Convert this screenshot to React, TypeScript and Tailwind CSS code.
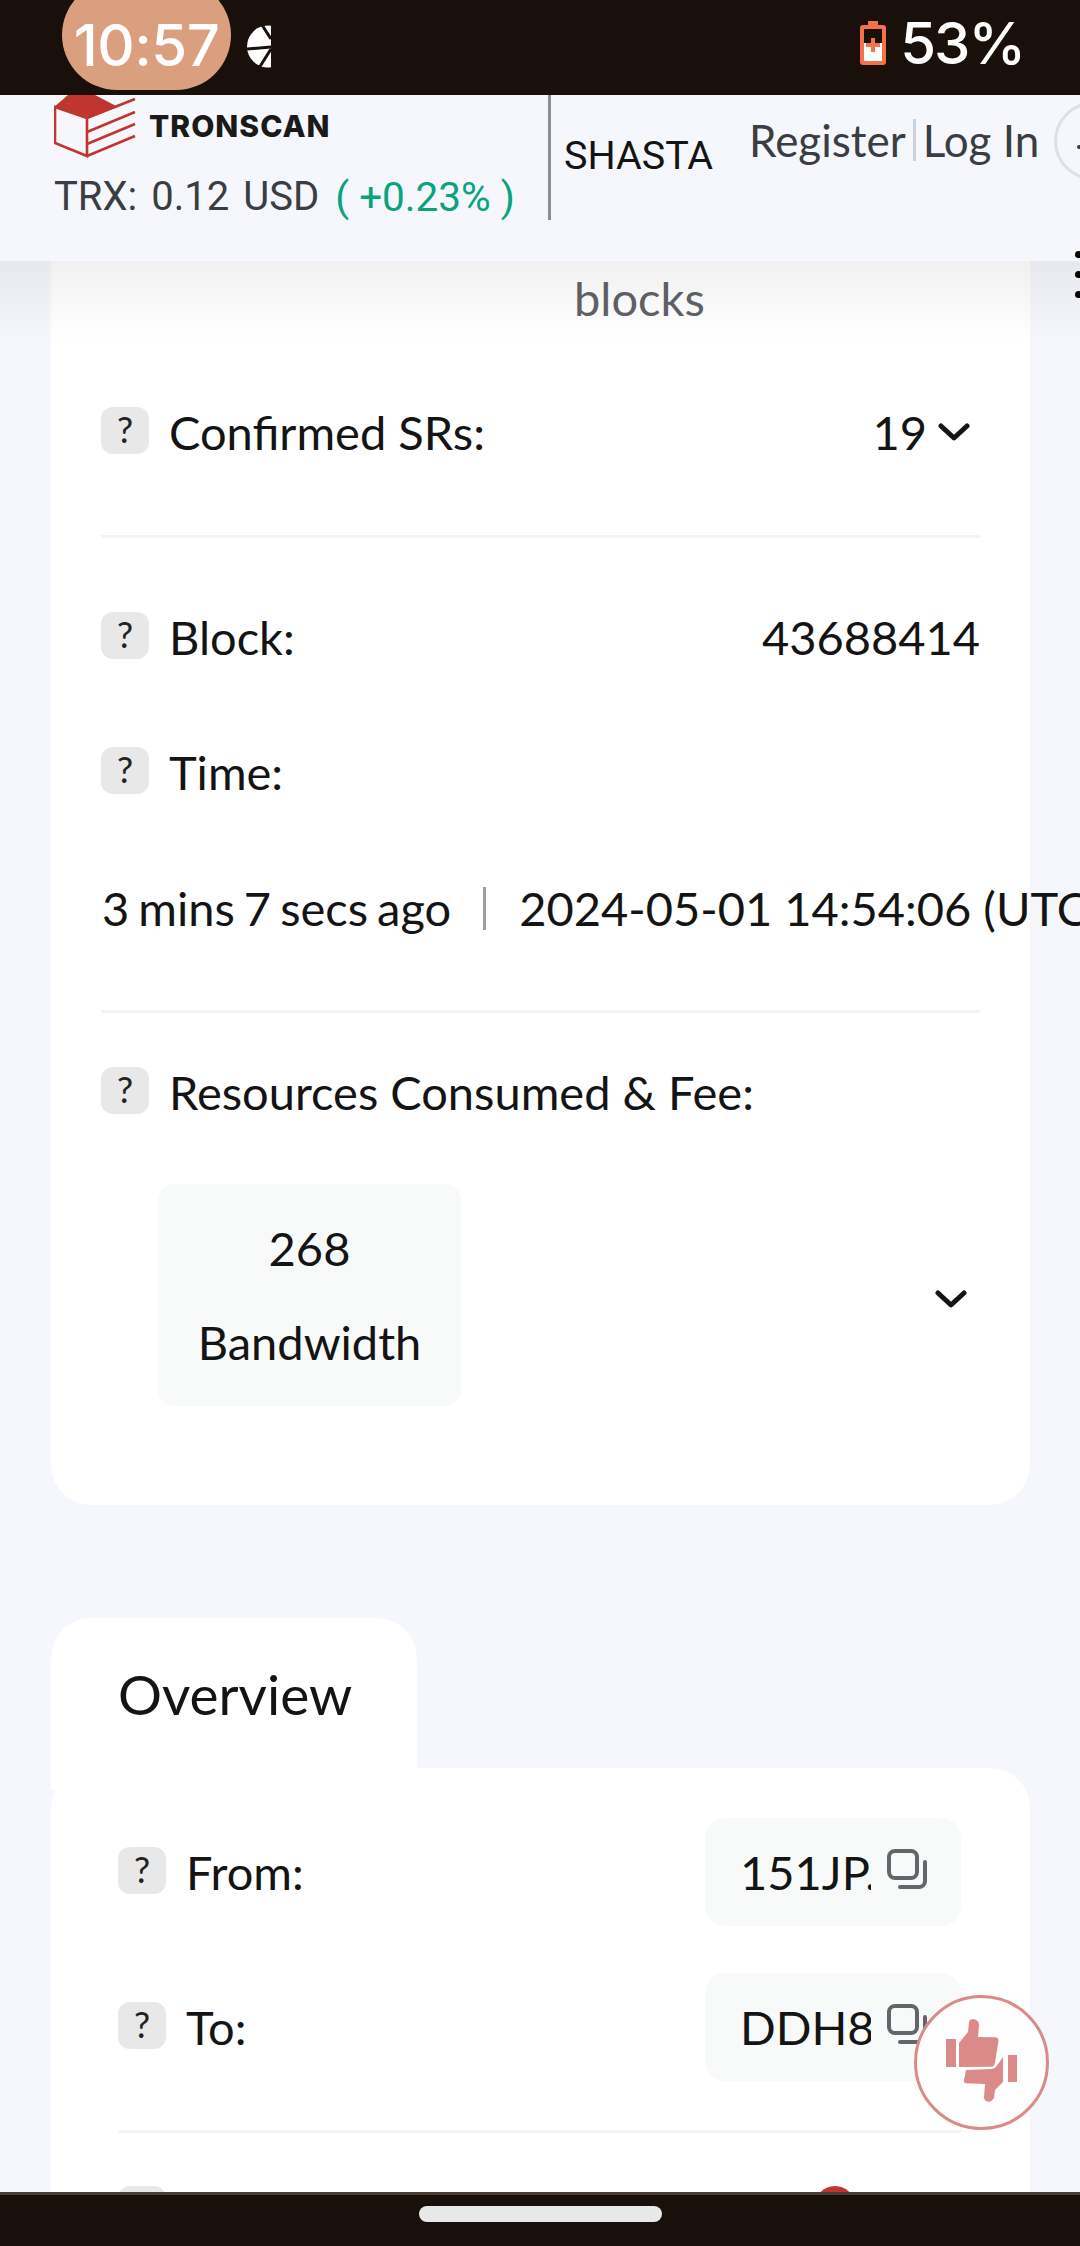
import type { ReactNode } from 'react'

const lato = 'font-["Lato",sans-serif]'
const roboto = 'font-["Roboto",sans-serif]'
const inter = 'font-["Inter",sans-serif]'

function Help() {
  return (
    <span className="flex h-[47px] w-[48px] shrink-0 items-center justify-center rounded-[12px] bg-[#e8e8e8] pb-[3px] text-[36px] leading-none text-[#222]">
      ?
    </span>
  )
}

function Label({ children }: { children: ReactNode }) {
  return (
    <div className="flex items-start gap-[20px]">
      <Help />
      <span className="text-[47px] leading-[50px] text-[#141414]">{children}</span>
    </div>
  )
}

function Chevron({ className }: { className: string }) {
  return (
    <svg viewBox="0 0 32 18" className={className} fill="none" stroke="#141414" strokeWidth="5" strokeLinecap="round" strokeLinejoin="round">
      <path d="M3 3l13 12L29 3" />
    </svg>
  )
}

function CopyIcon() {
  return (
    <svg viewBox="0 0 40 40" className="h-[40px] w-[40px] shrink-0" fill="none" stroke="#62666b" strokeWidth="4" strokeLinecap="round">
      <rect x="2" y="2" width="28" height="27" rx="6" />
      <path d="M38 13v19a6 6 0 0 1-6 6H13" />
    </svg>
  )
}

function AddressBox({ text }: { text: string }) {
  return (
    <div className="flex h-[108px] w-[256px] items-center rounded-[20px] bg-[#f8faf9] pl-[35px]">
      <span className="w-[131px] shrink-0 overflow-hidden whitespace-nowrap text-[47px] leading-[50px] text-[#141414]">{text}</span>
      <span className="ml-[16px] -translate-y-[3px]">
        <CopyIcon />
      </span>
    </div>
  )
}

function StatusBar() {
  return (
    <div className="relative flex h-[95px] shrink-0 items-start justify-between overflow-hidden bg-[#1a100b]">
      <div className="ml-[62px] flex items-center">
        <div className={`-mt-[20px] flex h-[110px] w-[169px] items-center justify-center rounded-[55px] bg-[#d99f7f] pt-[20px] text-[58px] font-medium leading-none tracking-[-0.5px] text-white ${inter}`}>
          10:57
        </div>
        <svg viewBox="0 0 24 43" className="ml-[16px] mt-[2px] h-[43px] w-[24px]">
          <circle cx="21" cy="21.5" r="21" fill="#fff" />
          <path d="M15 0l9 14M0 24l24-2M24 24L12 43" stroke="#1a100b" strokeWidth="3" fill="none" />
        </svg>
      </div>
      <div className="mr-[56px] mt-[14px] flex items-center gap-[14px]">
        <svg viewBox="0 0 26 44" className="h-[44px] w-[26px]">
          <path d="M8 0h10v4h5a3 3 0 0 1 3 3v34a3 3 0 0 1-3 3H3a3 3 0 0 1-3-3V7a3 3 0 0 1 3-3h5z" fill="#f4724a" />
          <rect x="4" y="8" width="18" height="32" fill="#1a100b" />
          <path d="M4 22h18v18H4z" fill="#fff" />
          <path d="M11 17h4v5h5v4h-5v5h-4v-5H6v-4h5z" fill="#f4724a" />
        </svg>
        <span className={`text-[58px] font-medium leading-none tracking-[-2px] text-white ${inter}`}>53%</span>
      </div>
    </div>
  )
}

function TopNav() {
  return (
    <header className="relative flex h-[166px] shrink-0 items-start overflow-hidden bg-[#f5f7fc]">
      <div className="w-[548px] shrink-0 pl-[54px]">
        <div className="flex h-[63px] items-start">
          <svg viewBox="54 95 82 63" className="h-[63px] w-[82px] shrink-0">
            <path d="M54 107l14-12h27l23 12-31 11z" fill="#c0352f" />
            <g fill="none" stroke="#c0352f" strokeWidth="2.6">
              <path d="M55 107v36l32 13v-38z" />
              <path d="M87 118l48-19M87 132l48-20M87 144l48-20M87 156l48-20" />
            </g>
          </svg>
          <span className={`ml-[13px] mt-[13px] text-[30px] font-extrabold leading-[36px] tracking-[1px] text-[#1a1a1a] ${inter}`}>
            TRONSCAN
          </span>
        </div>
        <div className={`mt-[14px] flex items-center whitespace-nowrap text-[40px] leading-[50px] text-[#3a3d42] ${roboto}`}>
          <span>TRX:</span>
          <span className="ml-[14px]">0.12</span>
          <span className="ml-[14px]">USD</span>
          <span className="ml-[16px] text-[40.5px] text-[#0aa37f]">( +0.23% )</span>
        </div>
      </div>
      <div className="h-[125px] w-[3px] shrink-0 bg-[#8a8f94]" />
      <span className={`ml-[13px] mt-[37px] text-[39.5px] leading-[48px] text-[#141414] ${roboto}`}>SHASTA</span>
      <div className={`absolute left-[749px] top-[20px] flex h-[50px] items-center whitespace-nowrap text-[44px] text-[#3a3d42] ${lato}`}>
        <span>Register</span>
        <span className="mx-[7px] h-[42px] w-[3px] bg-[#ccd2dc]" />
        <span>Log In</span>
      </div>
      <div className="absolute left-[1054px] top-[7px] flex h-[78px] w-[78px] items-center rounded-full border-[3px] border-[#dde0e5] pl-[20px]">
        <span className="mt-[12px] h-[4px] w-[8px] rounded-full bg-[#3a3d42]" />
      </div>
    </header>
  )
}

function LikeButton() {
  return (
    <div className="absolute left-[914px] top-[1995px] h-[135px] w-[135px] rounded-full border-[3px] border-[#da8b89] bg-[#fefefe]">
      <svg viewBox="0 0 135 135" className="-m-[3px] h-[135px] w-[135px]" fill="#da8b89">
        <path d="M32 44h10v28H32z" />
        <path d="M94 60h9v27h-9z" />
        <path d="M45 72V48l9-11 1-10q1-3 4-3 6 1 6 6l-1 12 18 .3q3 .7 2.3 4.7L81 68q-1 3.700-3.300 3.700z" />
        <path d="M89 62v25l-8 8-1 8q-2 3.700-5.700 3.700Q70 106 70 102l1-13-19-.7q-2.500-.300-2-3.300l2-10 25.700-1q3.300-.5 5-3z" />
      </svg>
    </div>
  )
}

export default function App() {
  return (
    <div className={`relative flex h-[2246px] w-[1080px] flex-col overflow-hidden bg-[#f5f7fc] ${lato}`}>
      <StatusBar />
      <TopNav />

      {/* CONTENT */}
      <main className="relative min-h-0 flex-1 overflow-hidden">
        <div className="mx-[51px] w-[979px] rounded-b-[40px] bg-white px-[50px] pb-[98.500px]">
          <div className="flex h-[74px] items-center pl-[473px] text-[47px] text-[#5f6368]">blocks</div>

          <div className="mt-[72px] flex items-start justify-between">
            <Label>Confirmed SRs:</Label>
            <div className="flex items-center gap-[11px] text-[47px] leading-[50px] text-[#141414]">
              <span>19</span>
              <Chevron className="mr-[10px] h-[18px] w-[32px]" />
            </div>
          </div>
          <div className="mt-[78px] h-[3px] bg-[#f2f3f4]" />

          <div className="mt-[74px] flex items-start justify-between">
            <Label>Block:</Label>
            <span className="text-[47px] leading-[50px] text-[#141414]">43688414</span>
          </div>

          <div className="mt-[85px]">
            <Label>Time:</Label>
          </div>

          <div className="mt-[86px] flex h-[50px] items-center whitespace-nowrap text-[47px] text-[#141414]">
            <span className="ml-[1px] shrink-0 [word-spacing:-3px]">3 mins 7 secs ago</span>
            <span className="ml-[32px] h-[43px] w-[3px] shrink-0 bg-[#9a9fa5]" />
            <span className="ml-[33px] shrink-0">2024-05-01 14:54:06 (UTC)</span>
          </div>
          <div className="mt-[77px] h-[3px] bg-[#f2f3f4]" />

          <div className="mt-[54px]">
            <Label>Resources Consumed &amp; Fee:</Label>
          </div>

          <div className="mt-[67px] flex items-center justify-between">
            <div className="ml-[57px] flex h-[222px] w-[303px] flex-col items-center justify-center gap-[44px] rounded-[16px] bg-[#f8faf9] text-[47px] leading-[50px] text-[#141414]">
              <span>268</span>
              <span>Bandwidth</span>
            </div>
            <Chevron className="mr-[13px] mt-[8px] h-[18px] w-[32px]" />
          </div>
        </div>

        <div className="ml-[51px] mt-[113px] flex h-[172px] w-[366px] items-start rounded-t-[40px] bg-white pl-[67px] pt-[46px] text-[55px] leading-[60px] text-[#141414]">
          Overview
        </div>

        <div className="relative mx-[51px] -mt-[22px] h-[600px] w-[979px] rounded-[40px] bg-white px-[67px] pr-[69px] pt-[50px]">
          <div className="flex items-center justify-between">
            <Label>From:</Label>
            <AddressBox text="151JP." />
          </div>
          <div className="mt-[47px] flex items-center justify-between">
            <Label>To:</Label>
            <AddressBox text="DDH8" />
          </div>
          <div className="mt-[49px] h-[3px] bg-[#f2f3f4]" />
          <div className="mt-[53px] flex items-start">
            <Help />
            <span className="ml-[649px] h-[40px] w-[40px] rounded-full bg-[#c0352f]" />
          </div>
        </div>

        {/* sombra do header */}
        <div className="pointer-events-none absolute inset-x-0 top-0 h-[80px] bg-gradient-to-b from-[#0000000f] to-transparent" />
      </main>

      {/* BARRA INFERIOR */}
      <footer className="flex h-[54px] shrink-0 justify-center border-t-[3px] border-[#4a3d35] bg-[#1a100b] pt-[11px]">
        <div className="h-[16px] w-[243px] rounded-full bg-[#e8e8e8]" />
      </footer>

      <div className="absolute left-[1075px] top-[251px] flex flex-col gap-[13px]">
        <span className="h-[7px] w-[7px] rounded-full bg-black" />
        <span className="h-[7px] w-[7px] rounded-full bg-black" />
        <span className="h-[7px] w-[7px] rounded-full bg-black" />
      </div>

      <LikeButton />
    </div>
  )
}
